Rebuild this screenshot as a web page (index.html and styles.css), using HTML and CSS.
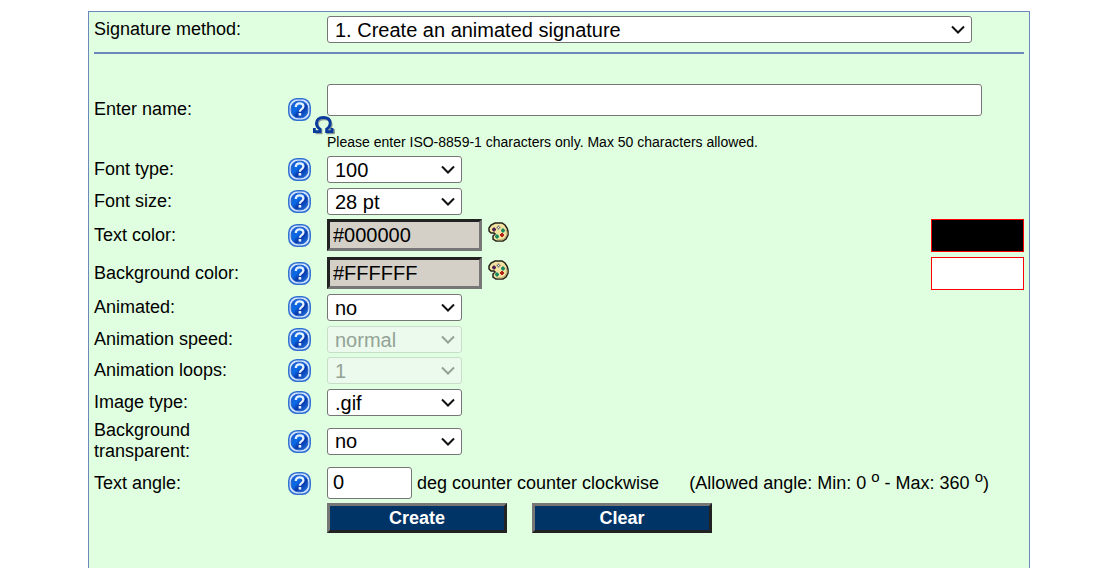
FILE: index.html
```html
<!DOCTYPE html>
<html lang="en">
<head>
<meta charset="utf-8">
<title>Signature generator</title>
<link rel="stylesheet" href="styles.css">
</head>
<body>
<svg class="defs" aria-hidden="true">
  <defs>
    <linearGradient id="ball" x1="0" y1="0" x2="1" y2="1">
      <stop offset="0" stop-color="#1a5fd0"/><stop offset=".4" stop-color="#0a6ae6"/><stop offset=".6" stop-color="#0838a8"/><stop offset="1" stop-color="#1f7cf0"/>
    </linearGradient>
    <symbol id="help" viewBox="0 0 23 23">
      <rect x=".8" y=".8" width="21.4" height="21.4" rx="8" fill="#d3e6ff" stroke="#2f6fd2" stroke-width="1.500"/>
      <rect x="3.200" y="3.200" width="16.600" height="16.600" rx="7" fill="url(#ball)" stroke="#2a62c8" stroke-width="1"/>
      <path d="M7.800 9C7.900 6.500 9.500 5.400 11.700 5.400c2.300 0 3.700 1.200 3.700 3.100 0 2.700-3.500 2.600-3.500 5.200" fill="none" stroke="#e6f0ff" stroke-width="2.300"/>
      <rect x="10.600" y="15" width="2.600" height="2.600" fill="#e6f0ff"/>
    </symbol>
    <symbol id="palette" viewBox="0 0 21 20">
      <path d="M7 1h7l3 2 2 3 1 3v4l-2 4-3 2H8l-3-2v-3l2-2-1-1H3L1 9V6l2-3z" fill="#f1e3a0" stroke="#25231a" stroke-width="1.500"/>
      <path d="M18 8l1 2v3l-2 3-3 2H9" fill="none" stroke="#a99d68" stroke-width="1"/>
      <path d="M6 5.500v4M4 7.500h4" stroke="#4b1c50" stroke-width="1.800"/>
      <path d="M10.500 3.500v4M8.500 5.500h4" stroke="#77757a" stroke-width="1.500"/>
      <path d="M10 5h1v1h-1z" fill="#fff"/>
      <path d="M15 6.500v4M13 8.500h4" stroke="#168760" stroke-width="2"/>
      <path d="M14 11v4M12 13h4" stroke="#b52218" stroke-width="2"/>
      <path d="M9 12.500v4M7 14.500h4" stroke="#168760" stroke-width="2"/>
    </symbol>
  </defs>
</svg>
<form class="panel">
  <div class="row row--method">
    <label class="label" for="method">Signature method:</label>
    <div class="field"><select class="select select--wide" id="method"><option>1. Create an animated signature</option></select></div>
  </div>
  <hr class="rule">
  <div class="row row--name tight">
    <label class="label" for="name">Enter name:</label>
    <svg class="help"><use href="#help"/></svg>
    <div class="field field--name">
      <input class="text text--name" id="name" type="text" maxlength="50">
      <svg class="omega" viewBox="0 0 22 19" aria-hidden="true">
        <g fill="none" stroke-width="2.800">
          <path d="M2.500 16.800H8v-2.500C5 12.500 4.500 10.500 4.500 8.500 4.500 4.800 7 2.800 11.300 2.800s6.900 2 6.900 5.700c0 2-.5 4-3.500 5.800v2.500h6.100M20.500 13v5" stroke="#8b9c96"/>
          <path d="M1.500 15.600H7v-2.500C4 11.300 3.400 9.300 3.400 7.300 3.400 3.600 6 1.500 10.300 1.500s6.900 2.100 6.900 5.800c0 2-.6 4-3.600 5.800v2.500h5.800M1.400 12v5M19 12v5" stroke="#0a3a9c"/>
        </g>
      </svg>
      <p class="hint">Please enter ISO-8859-1 characters only. Max 50 characters allowed.</p>
    </div>
  </div>
  <div class="row">
    <label class="label" for="font">Font type:</label>
    <svg class="help"><use href="#help"/></svg>
    <div class="field"><select class="select" id="font"><option>100</option></select></div>
  </div>
  <div class="row tight">
    <label class="label" for="size">Font size:</label>
    <svg class="help"><use href="#help"/></svg>
    <div class="field"><select class="select" id="size"><option>28 pt</option></select></div>
  </div>
  <div class="row">
    <label class="label" for="color">Text color:</label>
    <svg class="help"><use href="#help"/></svg>
    <div class="field field--color">
      <input class="color" id="color" type="text" value="#000000">
      <svg class="palette"><use href="#palette"/></svg>
      <span class="swatch swatch--text"></span>
    </div>
  </div>
  <div class="row tight">
    <label class="label" for="bg">Background color:</label>
    <svg class="help"><use href="#help"/></svg>
    <div class="field field--color">
      <input class="color" id="bg" type="text" value="#FFFFFF">
      <svg class="palette"><use href="#palette"/></svg>
      <span class="swatch swatch--bg"></span>
    </div>
  </div>
  <div class="row">
    <label class="label" for="animated">Animated:</label>
    <svg class="help"><use href="#help"/></svg>
    <div class="field"><select class="select" id="animated"><option>no</option></select></div>
  </div>
  <div class="row tight">
    <label class="label" for="speed">Animation speed:</label>
    <svg class="help"><use href="#help"/></svg>
    <div class="field"><select class="select" id="speed" disabled><option>normal</option></select></div>
  </div>
  <div class="row">
    <label class="label" for="loops">Animation loops:</label>
    <svg class="help"><use href="#help"/></svg>
    <div class="field"><select class="select" id="loops" disabled><option>1</option></select></div>
  </div>
  <div class="row tight">
    <label class="label" for="type">Image type:</label>
    <svg class="help"><use href="#help"/></svg>
    <div class="field"><select class="select" id="type"><option>.gif</option></select></div>
  </div>
  <div class="row">
    <label class="label" for="transparent">Background<br>transparent:</label>
    <svg class="help"><use href="#help"/></svg>
    <div class="field"><select class="select" id="transparent"><option>no</option></select></div>
  </div>
  <div class="row tight">
    <label class="label" for="angle">Text angle:</label>
    <svg class="help"><use href="#help"/></svg>
    <div class="field field--angle">
      <input class="text text--angle" id="angle" type="text" value="0">
      <span class="unit">deg counter counter clockwise</span>
      <span class="range">(Allowed angle: Min: 0 <sup>o</sup> - Max: 360 <sup>o</sup>)</span>
    </div>
  </div>
  <div class="row">
    <div class="field buttons">
      <button class="button" type="button">Create</button>
      <button class="button" type="reset">Clear</button>
    </div>
  </div>
</form>
</body>
</html>
```
FILE: styles.css
```css
* {
  box-sizing: border-box;
}

body {
  display: flex;
  min-height: 100vh;
  margin: 0;
  padding: 11px 71px 0 88px;
  background: #fff;
  color: #000;
  font: 18px/21px "Liberation Sans", Arial, sans-serif;
}

.defs {
  position: absolute;
  width: 0;
  height: 0;
}

.panel {
  flex: 1;
  padding: 4px 5px 0;
  background: #e0ffe0;
  border: 1px solid #6c87bb;
  border-bottom: 0;
}

.row {
  display: grid;
  grid-template-columns: 194px 39px 1fr;
  align-items: center;
  margin-bottom: 5px;
}

.tight {
  margin-bottom: 4px;
}

.row--method {
  margin-bottom: 9px;
}

.field {
  grid-column: 3;
  display: flex;
  min-width: 0;
}

.rule {
  height: 2px;
  margin: 0 0 13px;
  border: 0;
  background: #6c87bb;
}

.help {
  width: 23px;
  height: 23px;
}

.select {
  width: 135px;
  height: 27px;
  padding: 0 24px 0 7px;
  border: 1px solid #767676;
  border-radius: 3px;
  appearance: none;
  background: #fff url("data:image/svg+xml,%3Csvg xmlns='http://www.w3.org/2000/svg' width='14' height='9'%3E%3Cpath d='M1 1.500l6 6 6-6' fill='none' stroke='%23111' stroke-width='2'/%3E%3C/svg%3E") no-repeat right 6px center;
  color: #000;
  font: 20px "Liberation Sans", Arial, sans-serif;
}

.select:disabled {
  border-color: #c8dec9;
  background-color: #ebfaed;
  background-image: url("data:image/svg+xml,%3Csvg xmlns='http://www.w3.org/2000/svg' width='14' height='9'%3E%3Cpath d='M1 1.500l6 6 6-6' fill='none' stroke='%2393a295' stroke-width='2'/%3E%3C/svg%3E");
  color: #93a295;
  opacity: 1;
}

.select--wide {
  width: 645px;
  max-width: 100%;
}

.text {
  height: 32px;
  padding: 1px 5px 3px;
  border: 1px solid #767676;
  border-radius: 3px;
  background: #fff;
  font: 20px "Liberation Sans", Arial, sans-serif;
}

.field--name {
  position: relative;
  flex-direction: column;
  padding-top: 17px;
}

.text--name {
  width: 655px;
  max-width: 100%;
}

.omega {
  position: absolute;
  top: 49px;
  left: -14px;
  width: 22px;
  height: 19px;
}

.hint {
  margin: 16px 0 0;
  font-size: 14px;
  line-height: 20px;
}

.field--color {
  align-items: flex-start;
}

.color {
  width: 155px;
  height: 32px;
  padding: 0 3px;
  border: 3px solid;
  border-color: #222 #767676 #767676 #222;
  background: #d4d0c8;
  font: 20px "Liberation Sans", Arial, sans-serif;
}

.palette {
  width: 21px;
  height: 20px;
  margin: 3px 0 0 6px;
}

.swatch {
  width: 93px;
  height: 33px;
  margin-left: auto;
  border: 1px solid #f00;
}

.swatch--text {
  background: #000;
}

.swatch--bg {
  background: #fff;
}

.field--angle {
  align-items: center;
  white-space: nowrap;
}

.text--angle {
  width: 85px;
}

.unit {
  margin-left: 5px;
}

.range {
  margin-left: 30px;
}

sup {
  font-size: 15px;
  line-height: 0;
}

.buttons {
  gap: 25px;
}

.button {
  width: 180px;
  height: 30px;
  padding: 0;
  border: 3px solid;
  border-color: #767676 #222 #222 #767676;
  background: #036;
  color: #fff;
  font: bold 18px "Liberation Sans", Arial, sans-serif;
}
```
